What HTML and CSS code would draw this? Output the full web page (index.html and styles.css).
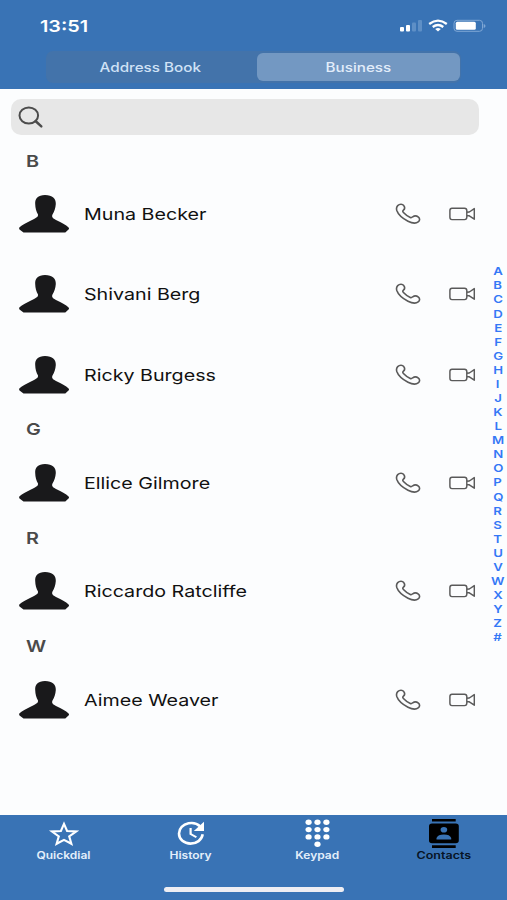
FILE: index.html
```html
<!DOCTYPE html>
<html lang="en">
<head>
<meta charset="utf-8">
<title>Contacts</title>
<link rel="stylesheet" href="styles.css">
</head>
<body>
<svg class="defs" width="0" height="0" aria-hidden="true">
  <symbol id="person" viewBox="0 0 52 40"><path d="M27 1C20 1 16.800 4.500 17.200 10C17.300 14 18.300 17.500 20 20.500C20.500 22.800 17.500 24.500 13 26.500C8.500 28.500 3.500 31.300 1.300 33.600Q.8 34.500 1.500 35.600L5.500 38.600H47.300L50.800 35.300Q51.400 34.400 50.600 33.500C48 30.900 43 28.400 39 26.500C35 24.600 33.300 23 34.500 20.500C36.300 17.500 37.500 14 37.800 10C38 4.500 34.500 1 27 1Z" fill="#19191b"/></symbol>
  <symbol id="phone" viewBox="0 0 26 22"><path d="M2.700 2.600C4.500.9 7.500.8 8.700 2.500C10.300 4.600 9.700 6.200 8.200 7.400C7.400 8.100 7.900 8.900 8.700 9.800C10.700 12 13 13.500 15.300 14.500C16.400 14.900 17 14.500 17.700 13.800C19.300 12.700 21.800 12.900 23.400 14.200C25.100 15.700 24.900 17.600 23.200 18.900C20.800 20.800 17.500 20.500 13 18.200C7.700 15.500 3.200 11.500 1.800 7.500C1.200 5.500 1.400 4 2.700 2.600Z" fill="none" stroke="#5a5a5a" stroke-width="1.6"/></symbol>
  <symbol id="video" viewBox="0 0 27 14"><path d="M3 1.200H15.500Q17.800 1.200 17.800 3.500V10.300Q17.800 12.600 15.500 12.600H3Q.9 12.600.9 10.300V3.500Q.9 1.200 3 1.200ZM17.800 5.300L20.300 5L25.300 1.600V12.200L20.300 8.800L17.800 8.500" fill="none" stroke="#5a5a5a" stroke-width="1.45" stroke-linejoin="round"/></symbol>
</svg>
<div class="app">
  <header class="top">
    <div class="status">
      <span class="time wide">13:51</span>
      <svg class="signals" width="88" height="14" viewBox="0 0 88 14">
        <g fill="#fff"><rect x="1" y="8" width="4" height="4.500" rx="1"/><rect x="7" y="6" width="4" height="6.500" rx="1"/></g>
        <g fill="#5e8fc6"><rect x="13" y="3.500" width="4" height="9" rx="1"/><rect x="19" y="1" width="4" height="11.500" rx="1"/></g>
        <g fill="none" stroke="#fff" stroke-width="2.300"><path d="M30.200 5Q39 -1.700 47.800 5"/><path d="M33.700 8Q39 4 44.300 8"/></g>
        <path d="M36.200 10Q39 8.200 41.800 10L39 12.600Z" fill="#fff"/>
        <rect x="55" y="1.300" width="28.500" height="11" rx="3" fill="none" stroke="#7fa7d5" stroke-width="1"/>
        <rect x="56.800" y="2.800" width="20" height="8" rx="1.500" fill="#fff"/>
        <path d="M84.700 5V9Q86.500 8.300 86.500 7Q86.500 5.700 84.700 5Z" fill="#7fa7d5"/>
      </svg>
    </div>
    <div class="segments">
      <div class="segment"><span class="wide">Address Book</span></div>
      <div class="segment selected"><span class="wide">Business</span></div>
    </div>
  </header>
  <main class="content">
    <div class="search">
      <svg width="26" height="23" viewBox="0 0 26 23" fill="none" stroke="#4c4c4c"><ellipse cx="10.800" cy="9.500" rx="9.300" ry="8" stroke-width="2"/><path d="M17.500 15L23.300 20.300" stroke-width="2.500" stroke-linecap="round"/></svg>
    </div>
    <div class="list">
      <h2><span class="wide">B</span></h2>
      <div class="row"><svg class="avatar"><use href="#person"/></svg><span class="name wide">Muna Becker</span><svg class="phone"><use href="#phone"/></svg><svg class="video"><use href="#video"/></svg></div>
      <div class="row"><svg class="avatar"><use href="#person"/></svg><span class="name wide">Shivani Berg</span><svg class="phone"><use href="#phone"/></svg><svg class="video"><use href="#video"/></svg></div>
      <div class="row"><svg class="avatar"><use href="#person"/></svg><span class="name wide">Ricky Burgess</span><svg class="phone"><use href="#phone"/></svg><svg class="video"><use href="#video"/></svg></div>
      <h2><span class="wide">G</span></h2>
      <div class="row"><svg class="avatar"><use href="#person"/></svg><span class="name wide">Ellice Gilmore</span><svg class="phone"><use href="#phone"/></svg><svg class="video"><use href="#video"/></svg></div>
      <h2><span class="wide">R</span></h2>
      <div class="row"><svg class="avatar"><use href="#person"/></svg><span class="name wide">Riccardo Ratcliffe</span><svg class="phone"><use href="#phone"/></svg><svg class="video"><use href="#video"/></svg></div>
      <h2><span class="wide">W</span></h2>
      <div class="row"><svg class="avatar"><use href="#person"/></svg><span class="name wide">Aimee Weaver</span><svg class="phone"><use href="#phone"/></svg><svg class="video"><use href="#video"/></svg></div>
    </div>
    <nav class="index">
      <span>A</span><span>B</span><span>C</span><span>D</span><span>E</span><span>F</span><span>G</span><span>H</span><span>I</span><span>J</span><span>K</span><span>L</span><span>M</span><span>N</span><span>O</span><span>P</span><span>Q</span><span>R</span><span>S</span><span>T</span><span>U</span><span>V</span><span>W</span><span>X</span><span>Y</span><span>Z</span><span>#</span>
    </nav>
  </main>
  <footer class="bottom">
    <div class="tabs">
      <div class="tab">
        <svg width="32" height="32" viewBox="0 0 32 32"><path d="M17 6.800L20.100 14L29 14.500L22.200 19.300L24.400 26.800L17 22.900L9.600 26.800L11.800 19.300L5 14.500L13.900 14Z" fill="none" stroke="#fff" stroke-width="2.100"/></svg>
        <span class="wide">Quickdial</span>
      </div>
      <div class="tab">
        <svg width="32" height="32" viewBox="0 0 32 32"><path d="M26 9.200C23 6.300 18.500 5.500 14.500 6.300C9 7.400 5 11.500 5 16.500C5 22.500 10.200 26.600 16.500 26.600C22.700 26.600 27.700 23 28.700 17.300" fill="none" stroke="#fff" stroke-width="2.600"/><path d="M30 4.800V14H19.800ZM15.500 11H17.700V16.400L23 19.400L21.800 21L15.500 17.600Z" fill="#fff"/></svg>
        <span class="wide">History</span>
      </div>
      <div class="tab">
        <svg width="32" height="32" viewBox="0 0 32 32" fill="#fff"><ellipse cx="7.600" cy="5.200" rx="3.100" ry="2.700"/><ellipse cx="16.500" cy="5.200" rx="3.100" ry="2.700"/><ellipse cx="25.400" cy="5.200" rx="3.100" ry="2.700"/><ellipse cx="7.600" cy="12.600" rx="3.100" ry="2.700"/><ellipse cx="16.500" cy="12.600" rx="3.100" ry="2.700"/><ellipse cx="25.400" cy="12.600" rx="3.100" ry="2.700"/><ellipse cx="7.600" cy="19.900" rx="3.100" ry="2.700"/><ellipse cx="16.500" cy="19.900" rx="3.100" ry="2.700"/><ellipse cx="25.400" cy="19.900" rx="3.100" ry="2.700"/><ellipse cx="16.500" cy="27.200" rx="3.100" ry="2.700"/></svg>
        <span class="wide">Keypad</span>
      </div>
      <div class="tab active">
        <svg width="32" height="32" viewBox="0 0 32 32"><path d="M4 1.900H27.700V4.600H4ZM4 28.200H27.700V31H4ZM4 6.500H27.800Q30.800 6.500 30.800 9.300V23.500Q30.800 26.300 27.800 26.300H4Q1 26.300 1 23.500V9.300Q1 6.500 4 6.500Z" fill="#000"/><ellipse cx="15.900" cy="12.800" rx="3.300" ry="2.800" fill="#3973b5"/><path d="M8.500 22.400V21Q10 17.600 15.900 17.600Q21.800 17.600 23.200 21V22.400Z" fill="#3973b5"/></svg>
        <span class="wide">Contacts</span>
      </div>
    </div>
    <div class="home"></div>
  </footer>
</div>
</body>
</html>
```
FILE: styles.css
```css
* { box-sizing: border-box; }
body { margin: 0; font-family: Inter, "Liberation Sans", sans-serif; background: #fcfdfe; }
.app { width: 507px; height: 900px; display: flex; flex-direction: column; overflow: hidden; }
.defs { position: absolute; }
svg { display: block; flex: none; }
.wide { display: inline-block; white-space: nowrap; transform: scaleX(1.2); }

.top { height: 89px; flex: none; background: #3973b5; }
.status { height: 51px; display: flex; justify-content: space-between; align-items: center; padding: 0 20px 0 40px; }
.time { font-size: 16.500px; font-weight: 600; color: #fff; transform-origin: left; }
.segments { width: 415px; height: 32px; margin-left: 46px; padding: 2px 1.500px; display: flex; border-radius: 7px; background: #4373aa; }
.segment { flex: 1; display: flex; align-items: center; justify-content: center; padding: 1px 4px 0 0; border-radius: 6px; font-size: 12.700px; font-weight: 500; color: #d0e2f6; }
.selected { flex: 0 0 203px; padding-right: 0; background: #7398c2; color: #e2edfa; }

.content { flex: 1; display: grid; grid-template-columns: 488px 19px; grid-template-rows: 57px 1fr; }
.search { grid-column: 1; margin: 10px 9px 11px 11px; padding-left: 7px; display: flex; align-items: center; border-radius: 10px; background: #e7e7e7; }
.list { grid-column: 1; }
.list h2 { margin: 0; height: 28.300px; padding: 1px 0 0 26px; display: flex; align-items: center; font-size: 16.500px; font-weight: 600; color: #4a4a4a; }
.list h2 .wide { transform-origin: left; }
.row { height: 80.100px; padding: 0 12px 0 18px; display: flex; align-items: center; }
.avatar { width: 52px; height: 40px; }
.name { flex: 1; margin-left: 14px; font-size: 16.500px; color: #111; transform: scaleX(1.192); transform-origin: left; }
.phone { width: 26px; height: 22px; margin-right: 28px; }
.video { width: 27px; height: 14px; }
.index { grid-column: 2; grid-row: 2; margin-top: 118.300px; padding-left: 1px; display: flex; flex-direction: column; align-items: center; font-size: 11px; font-weight: 600; color: #3478f6; }
.index span { height: 14.080px; line-height: 14.080px; transform: scaleX(1.2); }

.bottom { height: 85px; flex: none; background: #3973b5; }
.tabs { height: 72px; display: grid; grid-template-columns: repeat(4, 1fr); padding-top: 2px; }
.tab { display: flex; flex-direction: column; align-items: center; font-size: 10px; font-weight: 600; line-height: 12px; color: #e4effb; }
.active { color: #071425; }
.active .wide { transform: scaleX(1.25); }
.home { width: 180px; height: 5px; margin: 0 auto; border-radius: 3px; background: #eeeef3; }
```
